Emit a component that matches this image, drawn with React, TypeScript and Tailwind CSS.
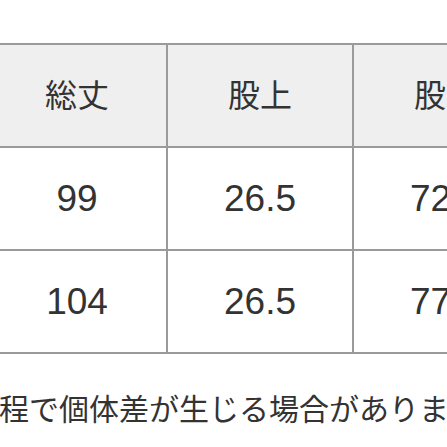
const rows = [
	["総丈", "股上", "股下"],
	["99", "26.5", "72.5"],
	["104", "26.5", "77.5"],
];

const widths = ["w-[180px]", "w-[186px]", "w-[186px]"];

export default function App() {
	return (
		<div
			className="w-[447px] h-[447px] overflow-hidden bg-white text-[#333]"
			style={{ fontFamily: '"Liberation Sans", "Noto Sans CJK JP", sans-serif' }}
		>
			<div className="h-[43px]" />
			<div className="ml-[-12px] w-[560px] border-t-2 border-[#9a9a9a]">
				{rows.map((row, i) => (
					<div
						key={i}
						className={`flex h-[103px] border-b-2 border-[#9a9a9a] ${
							i === 0 ? "bg-[#efefef]" : "bg-white"
						}`}
					>
						{row.map((cell, j) => (
							<div
								key={j}
								className={`${widths[j]} shrink-0 flex items-center justify-center border-r-2 border-[#9a9a9a] ${
									i === 0 ? "text-[32px]" : "text-[37px]"
								}`}
							>
								{cell}
							</div>
						))}
					</div>
				))}
			</div>
			<div className="h-[38px]" />
			<div className="ml-[-1px] h-[36px] flex items-center whitespace-nowrap text-[30px] leading-none">
				程で個体差が生じる場合があります。
			</div>
			<div className="h-[19px]" />
			<div className="h-[1px] bg-[#222]" />
		</div>
	);
}
